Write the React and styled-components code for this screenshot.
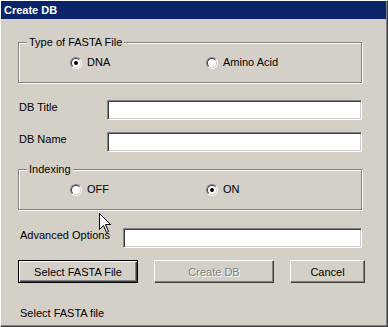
import styled, { createGlobalStyle } from 'styled-components';

const Global = createGlobalStyle`
  html, body {
    margin: 0;
    padding: 0;
    background: #d4d0c8;
  }
  body {
    font-family: "Liberation Sans", Arial, sans-serif;
    font-size: 11px;
    color: #000;
  }
`;

const Window = styled.div`
  position: relative;
  width: 388px;
  height: 327px;
  box-sizing: border-box;
  background: #d4d0c8;
  border-style: solid;
  border-width: 1px 1px 1px 1px;
  border-color: #ffffff #404040 #404040 #ffffff;
  box-shadow: inset -1px -1px #808080;
  display: flex;
  flex-direction: column;
  overflow: hidden;
`;

const TitleBar = styled.div`
  height: 18px;
  margin-right: 1px;
  background: #0a246a;
  color: #fff;
  font-weight: bold;
  font-size: 11px;
  line-height: 18px;
  padding-left: 3px;
  flex-shrink: 0;
`;

const Body = styled.div`
  display: flex;
  flex-direction: column;
  padding-left: 17px;
`;

const Group = styled.div`
  position: relative;
  box-sizing: border-box;
  width: 344px;
  height: 41px;
  margin-top: ${p => p.top}px;
  border: 1px solid #808080;
  box-shadow: inset 1px 1px #fff, 1px 1px #fff;
  display: grid;
  grid-template-columns: 136px auto;
  align-items: center;
  padding-left: 51px;
`;

const Legend = styled.span`
  position: absolute;
  left: 8px;
  top: -7px;
  padding: 0 2px;
  background: #d4d0c8;
  line-height: 13px;
`;

const Radio = styled.label`
  display: flex;
  align-items: center;
  gap: 5px;
  line-height: 13px;
`;

const RadioOuter = styled.span`
  box-sizing: border-box;
  width: 12px;
  height: 12px;
  border-radius: 50%;
  border: 1px solid;
  border-color: #808080 #ffffff #ffffff #808080;
  display: flex;
`;

const RadioInner = styled.span`
  box-sizing: border-box;
  flex: 1;
  border-radius: 50%;
  border: 1px solid;
  border-color: #404040 #d4d0c8 #d4d0c8 #404040;
  background: #fff;
  display: flex;
  align-items: center;
  justify-content: center;
`;

const Dot = styled.span`
  width: 4px;
  height: 4px;
  border-radius: 50%;
  background: #000;
`;

const Field = styled.div`
  display: flex;
  align-items: flex-start;
  margin-top: ${p => p.top}px;
  line-height: 13px;
`;

const Label = styled.span`
  width: ${p => p.w}px;
  padding-top: 1px;
  padding-left: ${p => p.pad || 0}px;
  box-sizing: border-box;
  white-space: nowrap;
`;

const Input = styled.div`
  box-sizing: border-box;
  width: ${p => p.w}px;
  height: 20px;
  background: #fff;
  border-style: solid;
  border-width: 1px;
  border-color: #808080 #ffffff #ffffff #808080;
  box-shadow: inset 1px 1px #404040, inset -1px -1px #d4d0c8;
`;

const Buttons = styled.div`
  display: flex;
  margin-top: 12px;
`;

const Button = styled.div`
  box-sizing: border-box;
  width: ${p => p.w}px;
  height: 23px;
  margin-left: ${p => p.ml || 0}px;
  background: #d4d0c8;
  border: 1px solid;
  border-color: ${p => (p.def ? '#000' : '#fff #404040 #404040 #fff')};
  box-shadow: ${p =>
    p.def
      ? 'inset 1px 1px #fff, inset -1px -1px #404040, inset -2px -2px #808080'
      : 'inset -1px -1px #808080'};
  display: flex;
  align-items: center;
  justify-content: center;
  color: ${p => (p.disabled ? '#808080' : '#000')};
  text-shadow: ${p => (p.disabled ? '1px 1px #fff' : 'none')};
`;

const Status = styled.div`
  margin-top: 24px;
  padding-left: 2px;
  line-height: 13px;
`;

const Cursor = styled.svg`
  position: absolute;
  left: 98px;
  top: 212px;
`;

function RadioOption({ checked, children }) {
  return (
    <Radio>
      <RadioOuter>
        <RadioInner>{checked && <Dot />}</RadioInner>
      </RadioOuter>
      {children}
    </Radio>
  );
}

function App() {
  return (
    <>
      <Global />
      <Window>
        <TitleBar>Create DB</TitleBar>
        <Body>
          <Group top={23}>
            <Legend>Type of FASTA File</Legend>
            <RadioOption checked>DNA</RadioOption>
            <RadioOption>Amino Acid</RadioOption>
          </Group>
          <Field top={17}>
            <Label w={89} pad={1}>DB Title</Label>
            <Input w={255} />
          </Field>
          <Field top={12}>
            <Label w={89} pad={1}>DB Name</Label>
            <Input w={255} />
          </Field>
          <Group top={17}>
            <Legend>Indexing</Legend>
            <RadioOption>OFF</RadioOption>
            <RadioOption checked>ON</RadioOption>
          </Group>
          <Field top={18}>
            <Label w={105} pad={2}>Advanced Options</Label>
            <Input w={239} />
          </Field>
          <Buttons>
            <Button w={120} def>Select FASTA File</Button>
            <Button w={120} ml={16} disabled>Create DB</Button>
            <Button w={75} ml={16}>Cancel</Button>
          </Buttons>
          <Status>Select FASTA file</Status>
        </Body>
        <Cursor width="13" height="21" viewBox="0 0 13 21">
          <path
            d="M0.5 0.5 L0.5 16.5 L4.5 12.5 L7.5 19.5 L9.5 18.5 L6.5 11.5 L11.5 11.5 Z"
            fill="#fff"
            stroke="#000"
            strokeWidth="1"
          />
        </Cursor>
      </Window>
    </>
  );
}

export default App;
